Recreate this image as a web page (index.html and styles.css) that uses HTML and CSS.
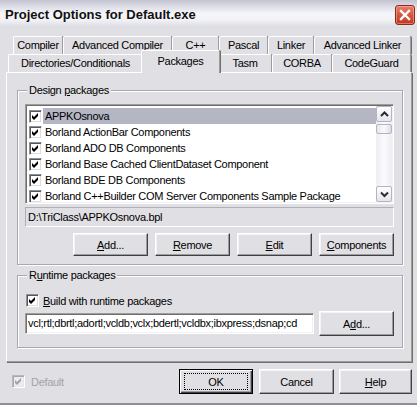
FILE: index.html
```html
<!DOCTYPE html>
<html>
<head>
<meta charset="utf-8">
<link rel="stylesheet" href="styles.css">
</head>
<body>
<div class="window">
  <div class="titlebar">
    <span class="title">Project Options for Default.exe</span>
    <div class="close">
      <svg width="18" height="18" viewBox="0 0 18 18"><path d="M5 5 L13 13 M13 5 L5 13" stroke="#fff" stroke-width="2.4" stroke-linecap="square" fill="none"/></svg>
    </div>
  </div>

  <div class="tabrow back">
    <div class="tab t-compiler">Compiler</div>
    <div class="tab t-advcomp">Advanced Compiler</div>
    <div class="tab t-cpp">C++</div>
    <div class="tab t-pascal">Pascal</div>
    <div class="tab t-linker">Linker</div>
    <div class="tab t-advlink">Advanced Linker</div>
  </div>
  <div class="tabrow front">
    <div class="tab t-dirs">Directories/Conditionals</div>
    <div class="tab selected">Packages</div>
    <div class="tab t-tasm">Tasm</div>
    <div class="tab t-corba">CORBA</div>
    <div class="tab t-cg">CodeGuard</div>
  </div>

  <div class="panel">
    <div class="group design">
      <span class="group-label">Design <u>p</u>ackages</span>
      <div class="listbox">
        <div class="items">
          <div class="item sel"><span class="cb"><svg width="11" height="11" viewBox="0 0 11 11"><polygon points="2,4 4,6 8,2 8,5 4,9 2,7" fill="#000"/></svg></span><span class="txt">APPKOsnova</span></div>
          <div class="item"><span class="cb"><svg width="11" height="11" viewBox="0 0 11 11"><polygon points="2,4 4,6 8,2 8,5 4,9 2,7" fill="#000"/></svg></span><span class="txt">Borland ActionBar Components</span></div>
          <div class="item"><span class="cb"><svg width="11" height="11" viewBox="0 0 11 11"><polygon points="2,4 4,6 8,2 8,5 4,9 2,7" fill="#000"/></svg></span><span class="txt">Borland ADO DB Components</span></div>
          <div class="item"><span class="cb"><svg width="11" height="11" viewBox="0 0 11 11"><polygon points="2,4 4,6 8,2 8,5 4,9 2,7" fill="#000"/></svg></span><span class="txt">Borland Base Cached ClientDataset Component</span></div>
          <div class="item"><span class="cb"><svg width="11" height="11" viewBox="0 0 11 11"><polygon points="2,4 4,6 8,2 8,5 4,9 2,7" fill="#000"/></svg></span><span class="txt">Borland BDE DB Components</span></div>
          <div class="item"><span class="cb"><svg width="11" height="11" viewBox="0 0 11 11"><polygon points="2,4 4,6 8,2 8,5 4,9 2,7" fill="#000"/></svg></span><span class="txt">Borland C++Builder COM Server Components Sample Package</span></div>
        </div>
        <div class="scrollbar">
          <div class="sb-btn"><svg width="13" height="14" viewBox="0 0 13 14"><polyline points="3,9 6.5,5.5 10,9" stroke="#2b2b33" stroke-width="2" fill="none"/></svg></div>
          <div class="sb-thumb"></div>
          <div class="sb-track"></div>
          <div class="sb-btn"><svg width="13" height="14" viewBox="0 0 13 14"><polyline points="3,5.5 6.5,9 10,5.5" stroke="#2b2b33" stroke-width="2" fill="none"/></svg></div>
        </div>
      </div>
      <div class="pathbox">D:\TriClass\APPKOsnova.bpl</div>
      <div class="btnrow">
        <div class="btn"><u>A</u>dd...</div>
        <div class="btn"><u>R</u>emove</div>
        <div class="btn"><u>E</u>dit</div>
        <div class="btn"><u>C</u>omponents</div>
      </div>
    </div>

    <div class="group runtime">
      <span class="group-label">R<u>u</u>ntime packages</span>
      <div class="checkrow">
        <span class="cb"><svg width="11" height="11" viewBox="0 0 11 11"><polygon points="2,4 4,6 8,2 8,5 4,9 2,7" fill="#000"/></svg></span>
        <span><u>B</u>uild with runtime packages</span>
      </div>
      <div class="editrow">
        <div class="edit">vcl;rtl;dbrtl;adortl;vcldb;vclx;bdertl;vcldbx;ibxpress;dsnap;cd</div>
        <div class="btn tall">A<u>d</u>d...</div>
      </div>
    </div>
  </div>

  <div class="footer">
    <span class="cb disabled"><svg width="11" height="11" viewBox="0 0 11 11"><polygon points="2,4 4,6 8,2 8,5 4,9 2,7" fill="#a3a2a8"/></svg></span>
    <span class="disabled-text">Default</span>
    <div class="btn default w-ok"><span class="focus">OK</span></div>
    <div class="btn w-cancel">Cancel</div>
    <div class="btn w-help"><u>H</u>elp</div>
  </div>
</div>
</body>
</html>
```

FILE: styles.css
```css
* {
  box-sizing: border-box;
}

body {
  margin: 0;
}

.window {
  width: 417px;
  height: 405px;
  background: #e0dfe3;
  font-family: "Liberation Sans", Arial, sans-serif;
  font-size: 11px;
  letter-spacing: -0.3px;
  color: #000;
  display: flex;
  flex-direction: column;
  border-bottom: 2px solid #8d8e98;
  overflow: hidden;
}

u {
  text-decoration: underline;
  text-underline-offset: 1px;
}

/* Title bar */
.titlebar {
  height: 28px;
  flex: none;
  display: flex;
  align-items: center;
  padding: 0 2px 0 5px;
  background: linear-gradient(#c3c3d1 0%, #dcdce6 22%, #f6f6fa 50%, #f2f2f7 70%, #dadae2 100%);
}

.title {
  font-weight: bold;
  font-size: 13px;
  letter-spacing: 0;
  color: #111;
}

.close {
  margin-left: auto;
  margin-top: 2px;
  width: 20px;
  height: 20px;
  border: 1px solid #8a2b1e;
  border-radius: 3px;
  background: linear-gradient(#e8806c, #d65a41 45%, #c1371f);
  box-shadow: inset 0 0 0 1px rgba(255, 200, 180, 0.45);
  display: flex;
  align-items: center;
  justify-content: center;
}

.close svg {
  display: block;
}

/* Tabs */
.tabrow {
  display: flex;
  height: 18px;
  flex: none;
}

.tabrow.back {
  margin-top: 8px;
  margin-left: 13px;
}

.tabrow.front {
  margin-left: 8px;
}

.tab {
  height: 18px;
  border-top: 1px solid #fff;
  border-left: 1px solid #fff;
  border-right: 1px solid #9d9da1;
  border-radius: 2px 2px 0 0;
  box-shadow: 1px 0 0 #716f64;
  display: flex;
  align-items: center;
  justify-content: center;
  padding-bottom: 1px;
  background: #e0dfe3;
  white-space: nowrap;
}

.t-compiler { width: 50px; }
.t-advcomp { width: 109px; }
.t-cpp { width: 47px; }
.t-pascal { width: 49px; }
.t-linker { width: 46px; }
.t-advlink { width: 97px; }

.t-dirs { width: 135px; }
.t-tasm { width: 54px; }
.t-corba { width: 60px; }
.t-cg { width: 79px; }

.tab.selected {
  width: 79px;
  height: 23px;
  margin: -4px -2px 0 -2px;
  position: relative;
  z-index: 2;
  padding-bottom: 3px;
}

/* Panel */
.panel {
  width: 406px;
  height: 290px;
  margin-left: 6px;
  flex: none;
  border-top: 1px solid #fff;
  border-left: 1px solid #fff;
  border-right: 1px solid #9d9da1;
  border-bottom: 1px solid #9d9da1;
  box-shadow: 1px 1px 0 #716f64;
  padding: 17px 0 0 10px;
}

.group {
  position: relative;
  width: 386px;
  border: 1px solid #a9a8b0;
  box-shadow: inset 1px 1px 0 #fff, 1px 1px 0 #fff;
  padding-left: 7px;
}

.group-label {
  position: absolute;
  top: -7px;
  left: 9px;
  padding: 0 2px;
  line-height: 13px;
  background: #e0dfe3;
}

.group.design {
  height: 175px;
  padding-top: 13px;
}

.group.runtime {
  height: 73px;
  margin-top: 10px;
  padding-top: 18px;
}

/* List box */
.listbox {
  width: 369px;
  height: 100px;
  background: #fff;
  border: 1px solid;
  border-color: #9d9da1 #fff #fff #9d9da1;
  box-shadow: inset 1px 1px 0 #716f64, inset -1px -1px 0 #f1f0f4;
  display: flex;
  padding: 1px;
}

.items {
  flex: 1;
  overflow: hidden;
  padding-top: 2px;
  padding-left: 2px;
}

.item {
  height: 16px;
  display: flex;
  align-items: center;
  white-space: nowrap;
}

.item .cb {
  margin-right: 1px;
}

.item .txt {
  height: 16px;
  line-height: 16px;
  padding-left: 2px;
  flex: 1;
}

.item.sel .txt {
  background: #b4b6c4;
}

.cb {
  width: 13px;
  height: 13px;
  flex: none;
  background: #fff;
  border: 1px solid;
  border-color: #8f8f96 #fff #fff #8f8f96;
  box-shadow: inset 1px 1px 0 #55555c, inset -1px -1px 0 #dcdce0;
  display: inline-flex;
  align-items: center;
  justify-content: center;
}

.cb svg {
  display: block;
}

.cb.disabled {
  background: #ecebef;
  border-color: #b9b8be #fff #fff #b9b8be;
  box-shadow: inset 1px 1px 0 #a9a8ae, inset -1px -1px 0 #e6e5ea;
}

/* Scrollbar */
.scrollbar {
  width: 16px;
  flex: none;
  display: flex;
  flex-direction: column;
  background: linear-gradient(90deg, #eeeef3, #fbfbfd 50%, #eeeef3);
}

.sb-btn {
  height: 16px;
  flex: none;
  border: 1px solid #b3b4c4;
  border-radius: 2px;
  background: linear-gradient(#ffffff, #e4e4ec);
  display: flex;
  align-items: center;
  justify-content: center;
}

.sb-thumb {
  height: 10px;
  margin-top: 2px;
  flex: none;
  border: 1px solid #b3b4c4;
  border-radius: 2px;
  background: linear-gradient(90deg, #e6e6ee, #fafafc 50%, #dcdce6);
}

.sb-track {
  flex: 1;
}

/* Path box */
.pathbox {
  width: 369px;
  height: 20px;
  margin-top: 3px;
  border: 1px solid;
  border-color: #b0afb6 #fff #fff #b0afb6;
  padding-left: 2px;
  line-height: 18px;
  white-space: nowrap;
}

/* Buttons */
.btnrow {
  width: 369px;
  margin-top: 6px;
  display: flex;
  justify-content: flex-end;
  gap: 7px;
}

.btn {
  width: 75px;
  height: 23px;
  flex: none;
  border: 1px solid;
  border-color: #fff #404040 #404040 #fff;
  box-shadow: inset -1px -1px 0 #9d9da1, inset 1px 1px 0 #f4f4f6;
  display: flex;
  align-items: center;
  justify-content: center;
  background: #e0dfe3;
  white-space: nowrap;
}

.btn.tall {
  height: 25px;
}

/* Runtime group */
.checkrow {
  height: 13px;
  display: flex;
  align-items: center;
  gap: 4px;
  margin-left: 1px;
}

.editrow {
  width: 369px;
  height: 25px;
  margin-top: 4px;
  display: flex;
  align-items: center;
  justify-content: space-between;
}

.edit {
  width: 289px;
  height: 21px;
  background: #fff;
  border: 1px solid;
  border-color: #9d9da1 #fff #fff #9d9da1;
  box-shadow: inset 1px 1px 0 #716f64, inset -1px -1px 0 #f1f0f4;
  padding-left: 2px;
  line-height: 19px;
  white-space: nowrap;
  overflow: hidden;
}

/* Footer */
.footer {
  margin-top: 7px;
  height: 25px;
  display: flex;
  align-items: center;
  padding: 0 5px 0 12px;
}

.disabled-text {
  margin-left: 6px;
  color: #a3a2a8;
}

.btn.w-ok {
  width: 74px;
  height: 25px;
  margin-left: auto;
  border: 1px solid #000;
  box-shadow: inset 1px 1px 0 #fff, inset -1px -1px 0 #404040, inset -2px -2px 0 #9d9da1;
}

.btn.w-cancel {
  width: 75px;
  height: 25px;
  margin-left: 6px;
}

.btn.w-help {
  width: 73px;
  height: 25px;
  margin-left: 5px;
}

.focus {
  width: 64px;
  height: 17px;
  border: 1px dotted #000;
  display: flex;
  align-items: center;
  justify-content: center;
}
```
